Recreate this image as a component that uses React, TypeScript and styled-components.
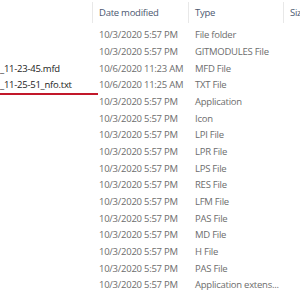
import styled, { createGlobalStyle } from 'styled-components'

const GlobalStyle = createGlobalStyle`
  html, body {
    margin: 0;
    padding: 0;
    background: #ffffff;
    overflow: hidden;
  }
`

const Pane = styled.div`
  position: relative;
  width: 300px;
  height: 300px;
  overflow: hidden;
  background: #ffffff;
  font-family: "Open Sans", "Noto Sans", sans-serif;
  font-size: 9.5px;
  letter-spacing: -0.25px;
`

const Grid = styled.div`
  display: grid;
  grid-template-columns: 92px 96px 95px 40px;
  grid-auto-rows: 16.667px;
  grid-template-rows: 26.667px;
`

const HeadCell = styled.div<{ $sep?: boolean }>`
  display: flex;
  align-items: center;
  padding-left: ${({ $sep }) => ($sep ? '6px' : '0')};
  color: #4c5870;
  white-space: nowrap;
  overflow: hidden;
  border-left: ${({ $sep }) => ($sep ? '1px solid #e8e8e8' : 'none')};
  margin: 2px 0 4px;
`

const Cell = styled.div<{ $kind: 'name' | 'date' | 'type' | 'size' }>`
  display: flex;
  align-items: center;
  padding-left: ${({ $kind }) => ($kind === 'name' ? '0' : '7px')};
  color: ${({ $kind }) => ($kind === 'name' ? '#1c1c1c' : '#6d6d6d')};
  white-space: nowrap;
  overflow: hidden;
`

const Underline = styled.div`
  position: absolute;
  left: 0;
  top: 93px;
  width: 98px;
  height: 2px;
  background: #c2182a;
`

const rows = [
  { name: '', date: '10/3/2020 5:57 PM', type: 'File folder' },
  { name: '', date: '10/3/2020 5:57 PM', type: 'GITMODULES File' },
  { name: '_11-23-45.mfd', date: '10/6/2020 11:23 AM', type: 'MFD File' },
  { name: '_11-25-51_nfo.txt', date: '10/6/2020 11:25 AM', type: 'TXT File' },
  { name: '', date: '10/3/2020 5:57 PM', type: 'Application' },
  { name: '', date: '10/3/2020 5:57 PM', type: 'Icon' },
  { name: '', date: '10/3/2020 5:57 PM', type: 'LPI File' },
  { name: '', date: '10/3/2020 5:57 PM', type: 'LPR File' },
  { name: '', date: '10/3/2020 5:57 PM', type: 'LPS File' },
  { name: '', date: '10/3/2020 5:57 PM', type: 'RES File' },
  { name: '', date: '10/3/2020 5:57 PM', type: 'LFM File' },
  { name: '', date: '10/3/2020 5:57 PM', type: 'PAS File' },
  { name: '', date: '10/3/2020 5:57 PM', type: 'MD File' },
  { name: '', date: '10/3/2020 5:57 PM', type: 'H File' },
  { name: '', date: '10/3/2020 5:57 PM', type: 'PAS File' },
  { name: '', date: '10/3/2020 5:57 PM', type: 'Application extens...' },
]

export default function App() {
  return (
    <Pane>
      <GlobalStyle />
      <Grid>
        <HeadCell />
        <HeadCell $sep>Date modified</HeadCell>
        <HeadCell $sep>Type</HeadCell>
        <HeadCell $sep>Siz</HeadCell>
        {rows.map((r, i) => [
          <Cell key={'n' + i} $kind="name">{r.name}</Cell>,
          <Cell key={'d' + i} $kind="date">{r.date}</Cell>,
          <Cell key={'t' + i} $kind="type">{r.type}</Cell>,
          <Cell key={'s' + i} $kind="size" />,
        ])}
      </Grid>
      <Underline />
    </Pane>
  )
}
